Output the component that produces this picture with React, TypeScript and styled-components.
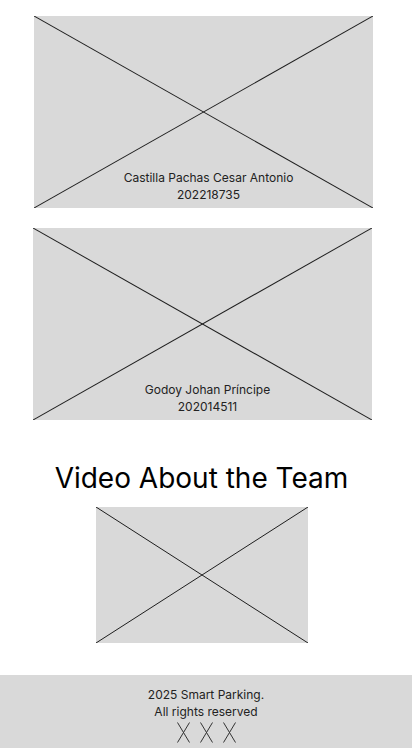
import { createGlobalStyle, styled } from 'styled-components'

const GlobalStyle = createGlobalStyle`
  body {
    margin: 0;
    background: #fff;
    font-family: Inter, "Noto Sans", sans-serif;
    color: #1e1e1e;
  }
`

const members = [
  { name: 'Castilla Pachas Cesar Antonio', code: '202218735', offset: 34 },
  { name: 'Godoy Johan Príncipe', code: '202014511', offset: 33 },
]

const Cross = () => (
  <CrossSvg viewBox="0 0 100 100" preserveAspectRatio="none">
    <line x1="0" y1="0" x2="100" y2="100" vectorEffect="non-scaling-stroke" />
    <line x1="100" y1="0" x2="0" y2="100" vectorEffect="non-scaling-stroke" />
  </CrossSvg>
)

const App = () => {
  return (
    <Page>
      <GlobalStyle />
      <Members>
        {members.map((m) => (
          <Placeholder key={m.code} $left={m.offset}>
            <Cross />
            <Caption>
              {m.name}
              <br />
              {m.code}
            </Caption>
          </Placeholder>
        ))}
      </Members>

      <Heading>Video About the Team</Heading>
      <Video>
        <Cross />
      </Video>

      <Footer>
        <FooterText>2025 Smart Parking.</FooterText>
        <FooterText>All rights reserved</FooterText>
        <Socials>
          {[0, 1, 2].map((i) => (
            <SocialIcon key={i} viewBox="0 0 13 21">
              <line x1="0.5" y1="0.5" x2="12.5" y2="20.5" />
              <line x1="12.5" y1="0.5" x2="0.5" y2="20.5" />
            </SocialIcon>
          ))}
        </Socials>
      </Footer>
    </Page>
  )
}

const Page = styled.div`
  display: flex;
  flex-direction: column;
  min-height: 748px;
`
const Members = styled.div`
  display: flex;
  flex-direction: column;
  gap: 20px;
  padding-top: 16px;
`
const Placeholder = styled.div<{ $left: number }>`
  position: relative;
  display: flex;
  align-items: flex-end;
  justify-content: center;
  width: 339px;
  height: 192px;
  margin-left: ${(p) => p.$left}px;
  padding-left: 10px;
  box-sizing: border-box;
  background: #d9d9d9;
`
const CrossSvg = styled.svg`
  position: absolute;
  inset: 0;
  width: 100%;
  height: 100%;
  stroke: #1e1e1e;
  stroke-width: 1;
`
const Caption = styled.p`
  position: relative;
  margin: 0 0 5px;
  font-size: 12px;
  line-height: 17px;
  text-align: center;
  color: #222;
`
const Heading = styled.h2`
  margin: 39px 0 0;
  padding-right: 9px;
  font-size: 28px;
  font-weight: 400;
  line-height: 38px;
  text-align: center;
  color: #000;
`
const Video = styled.div`
  position: relative;
  width: 212px;
  height: 136px;
  margin: 10px 0 0 96px;
  background: #d9d9d9;
`
const Footer = styled.footer`
  display: flex;
  flex-direction: column;
  align-items: center;
  margin-top: 32px;
  height: 73px;
  padding-top: 11px;
  box-sizing: border-box;
  background: #d9d9d9;
`
const FooterText = styled.p`
  margin: 0;
  font-size: 12px;
  line-height: 17px;
  color: #222;
`
const Socials = styled.div`
  display: flex;
  gap: 10px;
  margin-top: 2px;
`
const SocialIcon = styled.svg`
  width: 13px;
  height: 21px;
  flex-shrink: 0;
  stroke: #333;
  stroke-width: 1;
`

export default App
